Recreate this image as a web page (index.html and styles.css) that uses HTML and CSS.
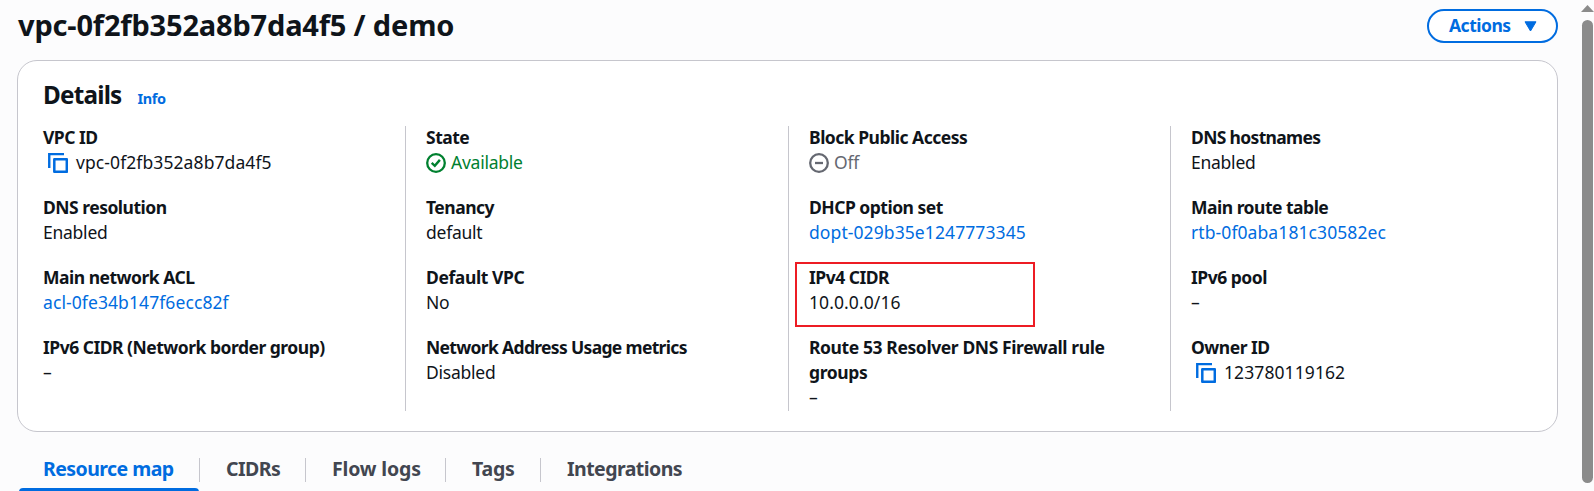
FILE: index.html
```
<!DOCTYPE html>
<html lang="en">
<head>
<meta charset="utf-8">
<title>VPC details</title>
<link rel="stylesheet" href="styles.css">
</head>
<body>
<svg class="defs" aria-hidden="true">
  <symbol id="copy" viewBox="0 0 20 20"><path d="M1.25 15V1.1H16" fill="none" stroke="currentColor" stroke-width="2.4"/><rect x="6.3" y="6.3" width="12.5" height="12.5" fill="none" stroke="currentColor" stroke-width="2.5" stroke-linejoin="round"/></symbol>
  <symbol id="check" viewBox="0 0 20 20"><circle cx="10" cy="10" r="8.8" fill="none" stroke="currentColor" stroke-width="2.3"/><path d="M5.7 9.9L8.8 12.8L13.9 6.9" fill="none" stroke="currentColor" stroke-width="2.4"/></symbol>
  <symbol id="off" viewBox="0 0 20 20"><circle cx="10" cy="10" r="8.8" fill="none" stroke="currentColor" stroke-width="2.3"/><path d="M6 10H14" stroke="currentColor" stroke-width="2.3"/></symbol>
</svg>
<div class="page">
  <main class="main">
    <header class="top">
      <h1 class="title">vpc-0f2fb352a8b7da4f5 / demo</h1>
      <button class="actions"><span>Actions</span><svg width="13" height="11" viewBox="0 0 13 11"><path d="M1 .8H12L6.5 10Z" fill="currentColor" stroke="currentColor" stroke-linejoin="round"/></svg></button>
    </header>
    <section class="card">
      <div class="card-head"><h2 class="heading">Details</h2><a class="info">Info</a></div>
      <div class="grid">
        <dl class="col">
          <div class="row"><dt>VPC ID</dt><dd class="copyable id"><svg class="icon blue"><use href="#copy"/></svg><span>vpc-0f2fb352a8b7da4f5</span></dd></div>
          <div class="row"><dt>DNS resolution</dt><dd>Enabled</dd></div>
          <div class="row"><dt>Main network ACL</dt><dd class="blue id">acl-0fe34b147f6ecc82f</dd></div>
          <div class="row"><dt>IPv6 CIDR (Network border group)</dt><dd>–</dd></div>
        </dl>
        <dl class="col">
          <div class="row"><dt>State</dt><dd class="status green"><svg class="icon"><use href="#check"/></svg><span>Available</span></dd></div>
          <div class="row"><dt>Tenancy</dt><dd>default</dd></div>
          <div class="row"><dt class="loose">Default VPC</dt><dd>No</dd></div>
          <div class="row"><dt class="tight">Network Address Usage metrics</dt><dd>Disabled</dd></div>
        </dl>
        <dl class="col">
          <div class="row"><dt>Block Public Access</dt><dd class="status gray"><svg class="icon"><use href="#off"/></svg><span>Off</span></dd></div>
          <div class="row"><dt>DHCP option set</dt><dd class="blue id">dopt-029b35e1247773345</dd></div>
          <div class="row marked"><dt>IPv4 CIDR</dt><dd class="id">10.0.0.0/16</dd></div>
          <div class="row"><dt class="loose">Route 53 Resolver DNS Firewall rule<br>groups</dt><dd>–</dd></div>
        </dl>
        <dl class="col">
          <div class="row"><dt class="tight">DNS hostnames</dt><dd>Enabled</dd></div>
          <div class="row"><dt>Main route table</dt><dd class="blue id">rtb-0f0aba181c30582ec</dd></div>
          <div class="row"><dt>IPv6 pool</dt><dd>–</dd></div>
          <div class="row"><dt>Owner ID</dt><dd class="copyable id"><svg class="icon blue"><use href="#copy"/></svg><span>123780119162</span></dd></div>
        </dl>
      </div>
    </section>
    <nav class="tabs">
      <a class="tab active">Resource map</a><a class="tab cidrs">CIDRs</a><a class="tab flow">Flow logs</a><a class="tab tags">Tags</a><a class="tab last">Integrations</a>
    </nav>
  </main>
  <div class="scroll"><svg width="13" height="7" viewBox="0 0 13 7"><path d="M0 7L6.5 0L13 7Z" fill="#8b8b8b"/></svg><div class="thumb"></div></div>
</div>
</body>
</html>
```
FILE: styles.css
```
* { box-sizing: border-box; }
body { margin: 0; height: 491px; overflow: hidden; background: #fcfcfd; color: #0f141a; font-family: "Noto Sans", sans-serif; font-size: 17.5px; line-height: 25px; white-space: nowrap; }
.defs { display: none; }
.page { display: flex; height: 491px; }
.main { width: 1541px; margin-left: 17px; flex: none; }
.top { display: flex; justify-content: space-between; height: 60px; padding-top: 9px; align-items: flex-start; }
.title { margin: 0; padding-left: 1px; font-size: 29px; line-height: 32px; font-weight: 700; letter-spacing: -0.17px; }
.actions { display: flex; align-items: center; justify-content: space-between; width: 131px; height: 34px; padding: 0 19px 0 20px; border: 2px solid #006ce0; border-radius: 17px; background: #fff; color: #006ce0; font: 700 17.5px/25px "Noto Sans", sans-serif; letter-spacing: -0.5px; }
.actions span { padding-bottom: 2px; }
.card { height: 372px; border: 1px solid #c6c6cd; border-radius: 20px; background: #fff; padding: 19px 25px 0; }
.card-head { display: flex; align-items: baseline; gap: 16px; height: 45px; }
.heading { margin: 0; font-size: 24.3px; line-height: 29px; letter-spacing: -0.8px; }
.info { color: #006ce0; font-size: 14.5px; font-weight: 700; line-height: 20px; letter-spacing: -0.4px; }
.grid { display: grid; grid-template-columns: 362px 383px 382px 1fr; height: 286px; }
.col { display: flex; flex-direction: column; gap: 20px; margin: 1px 0 0; padding-left: 20px; border-left: 1px solid #c6c6cd; }
.col:first-child { border: 0; padding-left: 0; }
.row { position: relative; top: -1px; }
dt { font-weight: 700; letter-spacing: -0.5px; }
dd { margin: 0; letter-spacing: -0.25px; height: 25px; }
.tight { letter-spacing: -0.67px; }
.loose { letter-spacing: -0.4px; }
.id { letter-spacing: 0.09px; }
.copyable, .status { display: flex; align-items: center; gap: 8px; }
.copyable { padding-left: 5px; }
.status { gap: 5px; }
.icon { width: 20px; height: 20px; flex: none; }
.blue { color: #006ce0; }
.green { color: #00802f; }
.gray { color: #656871; }
.marked::after { content: ""; position: absolute; left: -14px; top: -3px; width: 236px; height: 61px; border: 2px solid #ed1c24; }
.tabs { display: flex; height: 59px; padding: 26px 0 0 2px; }
.tab { position: relative; height: 24px; padding-left: 26px; border-right: 1px solid #c6c6cd; color: #424650; font-size: 19.5px; font-weight: 700; line-height: 21px; letter-spacing: -0.55px; }
.active { width: 181px; padding-left: 24px; color: #006ce0; }
.active::after { content: ""; position: absolute; left: 0; top: 30px; width: 180px; height: 5px; border-radius: 4px 4px 0 0; background: #006ce0; }
.cidrs { width: 106px; }
.flow { width: 140px; letter-spacing: -0.15px; }
.tags { width: 95px; letter-spacing: -0.2px; }
.last { border: 0; }
.scroll { display: flex; flex-direction: column; align-items: center; gap: 8px; width: 14px; margin-left: 22px; padding-top: 5px; flex: none; }
.thumb { width: 11px; height: 463px; border-radius: 6px; background: #8b8b8b; }
```
